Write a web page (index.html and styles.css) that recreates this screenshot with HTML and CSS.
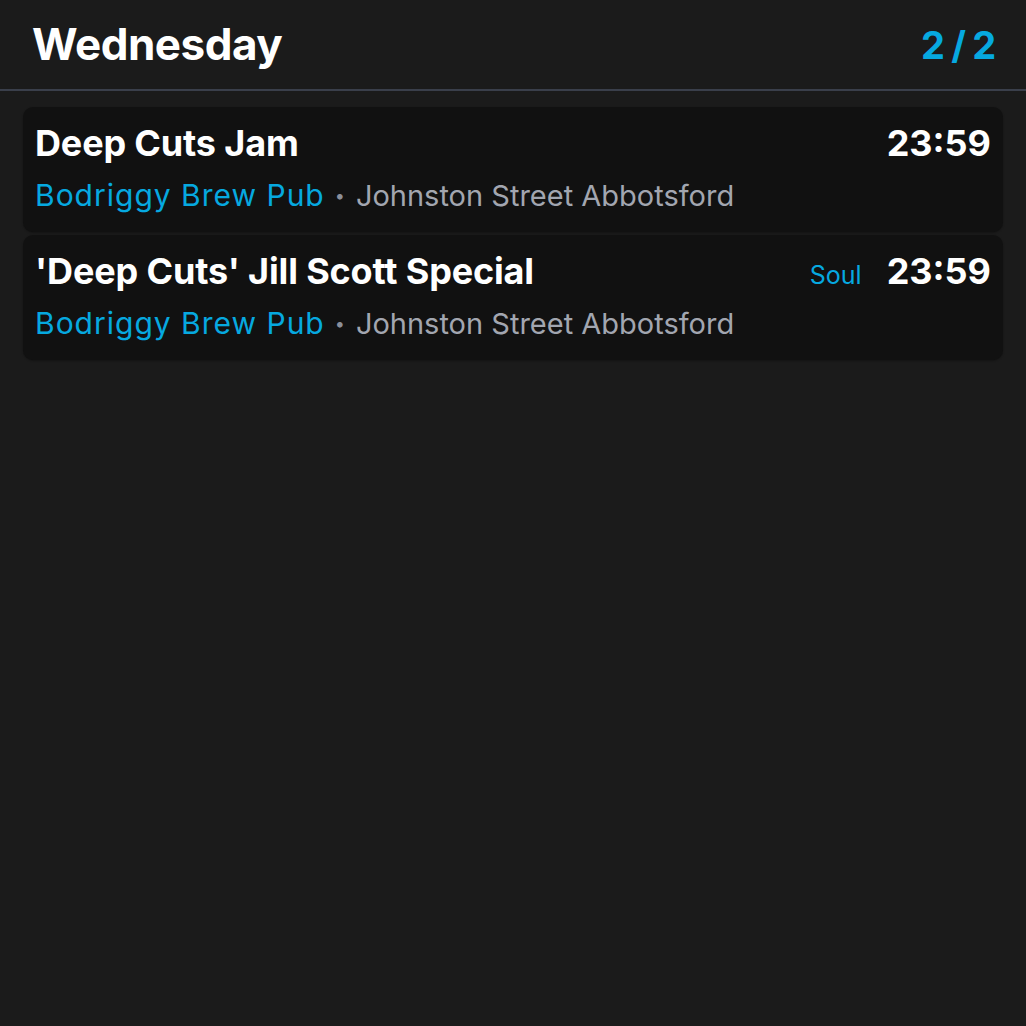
FILE: index.html
```html
<!DOCTYPE html>
<html>
<head>
<meta charset="utf-8">
<link rel="stylesheet" href="styles.css">
</head>
<body>
<header class="header">
  <h1 class="day">Wednesday</h1>
  <div class="count">2 / 2</div>
</header>
<main class="list">
  <div class="card">
    <div class="row top">
      <div class="title">Deep Cuts Jam</div>
      <div class="right">
        <div class="time">23:59</div>
      </div>
    </div>
    <div class="row sub">
      <span class="venue">Bodriggy Brew Pub</span>
      <span class="dot">•</span>
      <span class="addr">Johnston Street Abbotsford</span>
    </div>
  </div>
  <div class="card">
    <div class="row top">
      <div class="title">'Deep Cuts' Jill Scott Special</div>
      <div class="right">
        <span class="genre">Soul</span>
        <div class="time">23:59</div>
      </div>
    </div>
    <div class="row sub">
      <span class="venue">Bodriggy Brew Pub</span>
      <span class="dot">•</span>
      <span class="addr">Johnston Street Abbotsford</span>
    </div>
  </div>
</main>
</body>
</html>
```
FILE: styles.css
```css
html, body {
  margin: 0;
  padding: 0;
  background: #1b1b1b;
  font-family: Inter, "Noto Sans", sans-serif;
  color: #fff;
  height: 100%;
}
.header {
  display: flex;
  justify-content: space-between;
  align-items: center;
  height: 91px;
  padding: 0 31px 0 32px;
  box-sizing: border-box;
  border-bottom: 2px solid #3a3f4b;
}
.day {
  margin: 0;
  font-size: 44px;
  font-weight: 700;
  letter-spacing: -0.5px;
  padding-bottom: 2px;
}
.count {
  color: #06a9e0;
  font-size: 38px;
  font-weight: 700;
  letter-spacing: -1.3px;
}
.list {
  display: flex;
  flex-direction: column;
  gap: 3px;
  padding: 16px 23px;
}
.card {
  background: #111111;
  border-radius: 10px;
  padding: 14px 12px 14px 12px;
  display: flex;
  flex-direction: column;
  gap: 12px;
  box-shadow: 0 1px 2px rgba(0,0,0,0.3);
}
.row {
  display: flex;
  align-items: baseline;
}
.top {
  justify-content: space-between;
}
.title {
  font-size: 36px;
  font-weight: 700;
  line-height: 44px;
  letter-spacing: -0.15px;
}
.right {
  display: flex;
  align-items: baseline;
  gap: 25px;
}
.genre {
  color: #06a9e0;
  font-size: 25px;
}
.time {
  font-size: 36px;
  font-weight: 700;
}
.sub {
  font-size: 29px;
  line-height: 36px;
}
.venue {
  color: #06a9e0;
  font-size: 30px;
  letter-spacing: 1px;
}
.dot {
  color: #8a8f9a;
  font-size: 18px;
  margin: 0 11px 0 10px;
  position: relative;
  top: -4px;
}
.addr {
  color: #a2a6b0;
}
```
